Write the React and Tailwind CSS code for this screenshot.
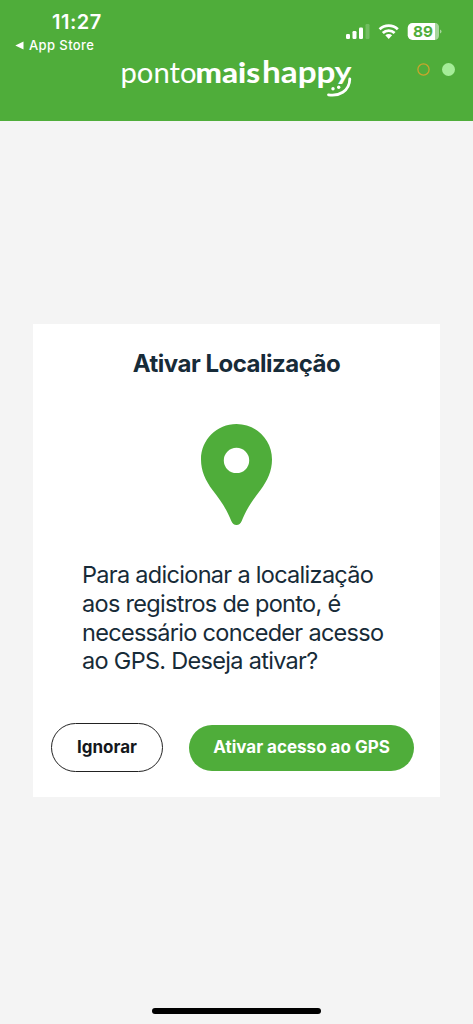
const StatusIcons = () => (
    <svg className="h-5 w-[100px]" viewBox="343 21 100 20">
        <g fill="#fff">
            <rect x="346" y="34" width="4" height="5" rx="1.2" />
            <rect x="352.5" y="31" width="4" height="8" rx="1.2" />
            <rect x="359" y="27.5" width="4" height="11.5" rx="1.2" />
            <rect x="365.5" y="24" width="4" height="15" rx="1.2" fillOpacity="0.2" />
        </g>
        <g fill="none" stroke="#fff" strokeWidth="2.8">
            <path d="M379.6 29.2a13.2 13.2 0 0 1 18.2 0" />
            <path d="M382.8 33a8.6 8.6 0 0 1 11.8 0" />
        </g>
        <path d="M385.3 35.3a4.8 4.8 0 0 1 6.8 0l-3.4 3.7z" fill="#fff" />
        <path d="M412.5 23h22.5v17h-22.5a4.800 4.800 0 0 1-4.800-4.800v-7.400a4.800 4.800 0 0 1 4.800-4.800z" fill="#fff" />
        <path d="M435 23a4 4 0 0 1 4 4.800v7.400a4.800 4.800 0 0 1-4 4.800z" fill="#fff" fillOpacity="0.5" />
        <path d="M440 29.500q1.500.5 1.500 2t-1.500 2z" fill="#fff" fillOpacity="0.5" />
        <text x="413" y="37" textLength="20" lengthAdjust="spacingAndGlyphs" fill="#4fad3a" className="font-['Inter',sans-serif] text-[15px] font-bold">89</text>
    </svg>
)

const Logo = () => (
    <svg className="-mt-[10px] h-[64px] w-[242px]" viewBox="119 46 242 64" fill="#fff">
        <text x="120.500" y="82.500" textLength="76" lengthAdjust="spacingAndGlyphs" className="font-['Lato',sans-serif] text-[28px] font-normal">ponto</text>
        <text x="195.500" y="82.500" textLength="64.500" lengthAdjust="spacingAndGlyphs" className="font-['Lato',sans-serif] text-[28px] font-black">mais</text>
        <text x="262" y="82.500" textLength="73.500" lengthAdjust="spacingAndGlyphs" className="font-['Lato',sans-serif] text-[30px] font-bold">happ</text>
        <text x="334.500" y="79.500" textLength="17" lengthAdjust="spacingAndGlyphs" className="font-['Lato',sans-serif] text-[24px] font-bold">y</text>
        {/* smile under the last letter */}
        <path d="M328.500 94.800c10 1.700 21-3.300 21.300-15.800" fill="none" stroke="#fff" strokeWidth="2.800" strokeLinecap="round" />
        <circle cx="333" cy="88.700" r="1.700" />
        <circle cx="338.700" cy="87.200" r="1.700" />
    </svg>
)

const Header = () => (
    <header className="flex h-[121px] flex-col bg-[#4fad3a] text-white">
        <div className="flex h-[34px] items-end justify-between pl-[52px] pr-[30px]">
            <span className="mb-[1px] text-[20px] leading-[22px] font-semibold tracking-[0.5px]">11:27</span>
            <div className="translate-y-[7px]">
                <StatusIcons />
            </div>
        </div>
        <div className="flex h-[22px] items-center gap-[5px] pt-[1px] pl-[15px]">
            <svg className="h-[9px] w-[9px]" viewBox="0 0 9 9" fill="#fff">
                <path d="M0.300 4.500L8.500 0.500V8.500z" />
            </svg>
            <span className="text-[13px] font-medium tracking-[0.4px]">App Store</span>
        </div>
        <div className="flex justify-between pl-[119px] pr-[18px]">
            <Logo />
            <div className="flex h-[27px] items-center gap-3">
                <svg className="h-[13px] w-[13px]" viewBox="0 0 13 13">
                    <circle cx="6.500" cy="6.500" r="5.600" fill="none" stroke="#c9a52c" strokeWidth="1.300" />
                </svg>
                <span className="h-[13px] w-[13px] rounded-full bg-[#a5ed98]"></span>
            </div>
        </div>
    </header>
)

const App = () => {
    return (
        <div className="flex h-[1024px] w-[473px] flex-col overflow-hidden bg-[#f4f4f4] font-['Inter',sans-serif]">
            <Header />
            <main className="flex-1 px-[33px] pt-[203px]">
                <div className="flex h-[473px] w-[407px] flex-col items-center bg-white text-[#172b38]">
                    <h1 className="mt-[24px] text-[24px] leading-[32px] font-bold tracking-[-0.5px] whitespace-nowrap">Ativar Localização</h1>
                    <svg className="mt-[44px] h-[101px] w-[71px]" viewBox="0 0 71 101">
                        <path
                            fill="#4fad3a"
                            fillRule="evenodd"
                            d="M35.500 0C16 0 0 15.500 0 35.500C0 47 4.500 56.500 11.500 66C20 77 25.500 85 30.300 97C31.500 99.500 33 101 35.500 101S39.500 99.500 40.700 97C45.500 85 51 77 59.500 66C66.500 56.500 71 47 71 35.500C71 15.500 55 0 35.500 0zM35.500 23.700a12.700 12.700 0 1 1 0 25.400a12.700 12.700 0 1 1 0-25.400z"
                        />
                    </svg>
                    <p className="mt-[36px] w-[309px] text-[23.5px] leading-[28.800px] tracking-[-0.7px] whitespace-nowrap">
                        Para adicionar a localização<br />
                        aos registros de ponto, é<br />
                        necessário conceder acesso<br />
                        ao GPS. Deseja ativar?
                    </p>
                    <div className="mt-[47px] flex w-full items-center justify-between pr-[26px] pl-[18px]">
                        <button className="h-[49px] w-[112px] rounded-full border-[1.5px] border-[#222] text-[17px] font-bold text-[#14171c]">Ignorar</button>
                        <button className="h-[46px] w-[225px] rounded-full bg-[#4fad3a] text-[17px] font-bold whitespace-nowrap text-white">Ativar acesso ao GPS</button>
                    </div>
                </div>
            </main>
            <div className="mx-auto mb-[10px] h-[6px] w-[169px] rounded-full bg-black"></div>
        </div>
    )
}

export default App
